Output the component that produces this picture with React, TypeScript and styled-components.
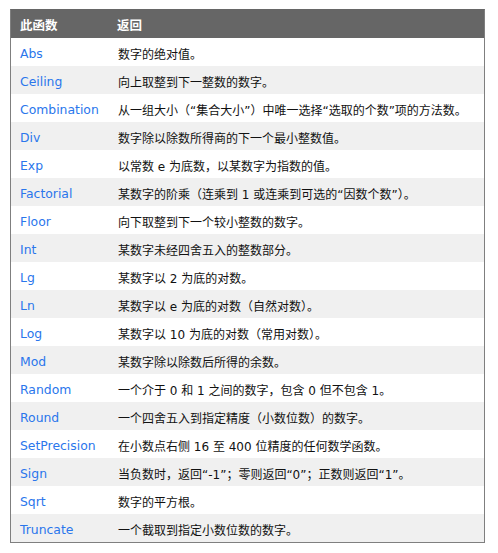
import React from "react";
import styled, { createGlobalStyle } from "styled-components";

const GlobalStyle = createGlobalStyle`
  html, body {
    margin: 0;
    padding: 0;
    background: #ffffff;
  }
  body {
    font-family: "DejaVu Sans", "Noto Sans CJK SC", sans-serif;
    font-size: 12px;
    color: #000;
  }
`;

const Page = styled.div`
  padding: 9px 13px 11px 10px;
`;

const Table = styled.div`
  width: 475px;
  box-sizing: border-box;
  border: 1px solid #7f7f7f;
  border-top-color: #666666;
  display: grid;
  grid-template-columns: 97px minmax(0, 1fr);
`;

const HeaderCell = styled.div`
  background: #666666;
  color: #ffffff;
  font-weight: bold;
  font-size: 12.5px;
  display: flex;
  align-items: center;
  padding-left: 9px;
  margin-top: -1px;
  height: 29px;
  padding-top: 1px;
  box-sizing: border-box;
`;

const Cell = styled.div<{ $alt: boolean }>`
  background: ${(p) => (p.$alt ? "#f0f0f0" : "#ffffff")};
  height: 28px;
  display: flex;
  align-items: center;
  padding-left: 9px;
  padding-top: 2px;
  box-sizing: border-box;
  white-space: nowrap;
  overflow: hidden;
`;

const FnCell = styled(Cell)`
  color: #2a76ec;
  font-size: 12.4px;
`;

const DescCell = styled(Cell)`
  padding-left: 10px;
  color: #111;
`;

const rows: [string, string][] = [
  ["Abs", "数字的绝对值。"],
  ["Ceiling", "向上取整到下一整数的数字。"],
  ["Combination", "从一组大小（“集合大小”）中唯一选择“选取的个数”项的方法数。"],
  ["Div", "数字除以除数所得商的下一个最小整数值。"],
  ["Exp", "以常数 e 为底数，以某数字为指数的值。"],
  ["Factorial", "某数字的阶乘（连乘到 1 或连乘到可选的“因数个数”）。"],
  ["Floor", "向下取整到下一个较小整数的数字。"],
  ["Int", "某数字未经四舍五入的整数部分。"],
  ["Lg", "某数字以 2 为底的对数。"],
  ["Ln", "某数字以 e 为底的对数（自然对数）。"],
  ["Log", "某数字以 10 为底的对数（常用对数）。"],
  ["Mod", "某数字除以除数后所得的余数。"],
  ["Random", "一个介于 0 和 1 之间的数字，包含 0 但不包含 1。"],
  ["Round", "一个四舍五入到指定精度（小数位数）的数字。"],
  ["SetPrecision", "在小数点右侧 16 至 400 位精度的任何数学函数。"],
  ["Sign", "当负数时，返回“-1”；零则返回“0”；正数则返回“1”。"],
  ["Sqrt", "数字的平方根。"],
  ["Truncate", "一个截取到指定小数位数的数字。"],
];

export default function App() {
  return (
    <>
      <GlobalStyle />
      <Page>
        <Table>
          <HeaderCell>此函数</HeaderCell>
          <HeaderCell>返回</HeaderCell>
          {rows.map(([fn, desc], i) => (
            <React.Fragment key={fn}>
              <FnCell $alt={i % 2 === 1}>{fn}</FnCell>
              <DescCell $alt={i % 2 === 1}>{desc}</DescCell>
            </React.Fragment>
          ))}
        </Table>
      </Page>
    </>
  );
}
